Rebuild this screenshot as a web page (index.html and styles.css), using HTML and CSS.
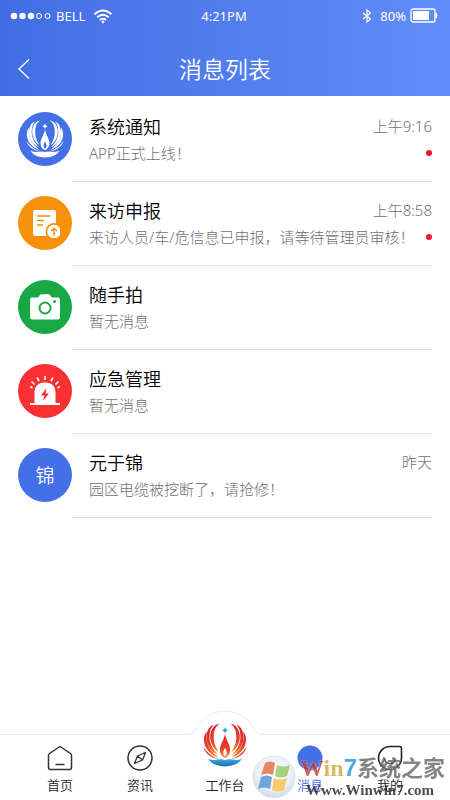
FILE: index.html
```html
<!DOCTYPE html>
<html lang="zh-CN">
<head>
	<meta charset="utf-8">
	<meta name="viewport" content="width=device-width, initial-scale=1">
	<title>消息列表</title>

	<link rel="stylesheet" href="styles.css">
</head>
<body>

	<!-- lotus logo, used in the list and in the tab bar -->
	<svg class="defs" width="0" height="0">
		<defs>
			<linearGradient id="fire" x1="0" y1="0" x2="0" y2="1">
				<stop offset="0" stop-color="#d8202c"></stop>
				<stop offset="0.6" stop-color="#e5402a"></stop>
				<stop offset="1" stop-color="#f58a2c"></stop>
			</linearGradient>
			<linearGradient id="sea" x1="0" y1="0" x2="0" y2="1">
				<stop offset="0" stop-color="#3fb4e8"></stop>
				<stop offset="1" stop-color="#1668b8"></stop>
			</linearGradient>
			<g id="wing">
				<path d="M48 2C36 2 22 14 20 36C19 58 30 76 44 84C34 68 29 54 30 38C31 20 36 8 48 2Z"></path>
				<path d="M30 5C18 8 9 22 9 42C9 66 24 84 42 92C28 76 19 62 18 42C18 24 22 12 30 5Z"></path>
				<path d="M10 24C2 34 0 46 3 58C8 80 24 94 44 100C26 86 14 72 10 54C8 42 8 34 10 24Z"></path>
				<path d="M0 70C6 90 24 104 48 106C28 100 12 88 0 70Z"></path>
			</g>
			<path id="flame" fill-rule="evenodd" d="M63 30C61 50 48 62 48 78C48 89 54 97 63 102C72 97 78 89 78 78C78 62 65 50 63 30ZM63 72C66 78 68 82 68 87C68 92 66 95 63 97C60 95 58 92 58 87C58 82 60 78 63 72Z"></path>
			<path id="bowl" d="M14 103C34 114 48 101 63 108C78 101 92 114 112 103C98 134 28 134 14 103Z"></path>
			<path id="spark" d="M63 12l3 6 6 3-6 3-3 6-3-6-6-3 6-3z"></path>
		</defs>
	</svg>

	<div class="app">
		<header class="header">
			<div class="status">
				<div class="status-left">
					<svg width="42" height="8" viewBox="0 0 42 8" fill="#fff">
						<circle cx="4" cy="4" r="3.2"></circle>
						<circle cx="12.5" cy="4" r="3.2"></circle>
						<circle cx="21" cy="4" r="3.2"></circle>
						<circle cx="29" cy="4" r="2.5" fill="none" stroke="#fff"></circle>
						<circle cx="37.5" cy="4" r="2.5" fill="none" stroke="#fff"></circle>
					</svg>
					<span class="carrier">BELL</span>
					<svg width="20" height="15" viewBox="0 0 20 15" fill="none" stroke="#fff" stroke-width="2">
						<path d="M1.5 5.2Q10 -2.2 18.5 5.2M4.3 8.2Q10 3.2 15.7 8.2M7 11Q10 8.6 13 11"></path>
						<circle cx="10" cy="13" r="1" stroke-width="1" fill="#fff"></circle>
					</svg>
				</div>
				<span>4:21PM</span>
				<div class="status-right">
					<svg width="10" height="14" viewBox="0 0 10 14" fill="none" stroke="#fff" stroke-width="1.2">
						<path d="M1 4L8.5 10L5 13V1L8.5 4L1 10"></path>
					</svg>
					<span class="percent">80%</span>
					<svg width="28" height="16" viewBox="0 0 28 16">
						<rect x="1" y="1" width="24" height="13" rx="2" fill="none" stroke="#fff" stroke-width="1.3"></rect>
						<rect x="3" y="3" width="16" height="9" fill="#fff"></rect>
						<path d="M26 5Q28 7.5 26 10Z" fill="#fff" stroke="#fff"></path>
					</svg>
				</div>
			</div>
			<div class="titlebar">
				<button class="back" type="button" aria-label="返回">
					<svg width="12" height="20" viewBox="0 0 12 20" fill="none" stroke="#fff" stroke-width="1.3">
						<path d="M11 .5L1 10L11 19.5"></path>
					</svg>
				</button>
				<h1>消息列表</h1>
			</div>
		</header>

		<ul class="list">
			<li class="item">
				<div class="avatar blue">
					<svg width="38" height="38" viewBox="0 0 126 128" fill="#fff">
						<use href="#wing"></use>
						<use href="#wing" transform="translate(126 0) scale(-1 1)"></use>
						<use href="#flame"></use>
						<use href="#bowl"></use>
						<use href="#spark"></use>
					</svg>
				</div>
				<div class="content">
					<div class="line"><h2>系统通知</h2><time>上午9:16</time></div>
					<div class="line"><p>APP正式上线！</p><i class="dot"></i></div>
				</div>
			</li>
			<li class="item">
				<div class="avatar orange">
					<svg width="30" height="30" viewBox="0 0 30 30">
						<rect x="3" y="2" width="23" height="26" rx="2" fill="#fff"></rect>
						<path d="M7 8H20M7 12.5H14M7 17H13" stroke="#f7900a" stroke-width="1.5"></path>
						<circle cx="24" cy="23.5" r="8.5" fill="#f7900a"></circle>
						<circle cx="24" cy="23.5" r="6.8" fill="#fff"></circle>
						<path d="M24 27.5V20.5M21 23L24 20.2L27 23" fill="none" stroke="#f7900a" stroke-width="1.5"></path>
					</svg>
				</div>
				<div class="content">
					<div class="line"><h2>来访申报</h2><time>上午8:58</time></div>
					<div class="line"><p>来访人员/车/危信息已申报，请等待管理员审核！</p><i class="dot"></i></div>
				</div>
			</li>
			<li class="item">
				<div class="avatar green">
					<svg width="30" height="26" viewBox="0 0 30 26">
						<path d="M2 3.500H8L10 1Q10.5 .3 11.5 .3H18.5Q19.5 .3 20 1L22 3.5H28Q30 3.5 30 5.5V23.5Q30 25.5 28 25.5H2Q0 25.5 0 23.5V5.5Q0 3.5 2 3.5Z" fill="#fff"></path>
						<circle cx="15" cy="14" r="5.5" fill="none" stroke="#18a844" stroke-width="2"></circle>
						<circle cx="24.5" cy="7.5" r="1.5" fill="#18a844"></circle>
					</svg>
				</div>
				<div class="content">
					<div class="line"><h2>随手拍</h2></div>
					<div class="line"><p>暂无消息</p></div>
				</div>
			</li>
			<li class="item">
				<div class="avatar red">
					<svg width="30" height="30" viewBox="0 0 30 30">
						<path d="M4.5 27V17Q4.500 6.500 15 6.500T25.500 17V27H30V29H0V27Z" fill="#fff"></path>
						<path d="M15 4V0M9 5L7 1.5M21 5L23 1.5M4.500 8.500L1.500 5.500M25.500 8.500L28.500 5.500M2.500 12L.2 10.500M27.500 12L29.800 10.500" stroke="#fff" stroke-width="1.6"></path>
						<path d="M16.500 12L11 19.500H14.500L13 25L19 17.500H15.500Z" fill="#fa3032"></path>
					</svg>
				</div>
				<div class="content">
					<div class="line"><h2>应急管理</h2></div>
					<div class="line"><p>暂无消息</p></div>
				</div>
			</li>
			<li class="item">
				<div class="avatar blue">锦</div>
				<div class="content">
					<div class="line"><h2>元于锦</h2><time>昨天</time></div>
					<div class="line"><p>园区电缆被挖断了，请抢修！</p></div>
				</div>
			</li>
		</ul>

		<nav class="tabs">
			<a class="tab" href="#home">
				<svg width="26" height="26" viewBox="0 0 26 26" fill="none" stroke="#333" stroke-width="1.5" stroke-linejoin="round">
					<path d="M13 1.5L23.5 8.5Q24.5 9.2 24.5 10.5V22.5Q24.5 24.5 22.5 24.5H3.5Q1.5 24.5 1.5 22.5V10.5Q1.5 9.2 2.5 8.500Z"></path>
					<path d="M8.5 19.5H17.5"></path>
				</svg>
				<span>首页</span>
			</a>
			<a class="tab" href="#news">
				<svg width="26" height="26" viewBox="0 0 26 26" fill="none" stroke="#333" stroke-width="1.5">
					<circle cx="13" cy="13" r="12"></circle>
					<path d="M18.5 7.5L10.5 11L7.5 18.5L15.5 15ZM10.5 11L15.5 15" stroke-linejoin="round" stroke-width="1.3"></path>
				</svg>
				<span>资讯</span>
			</a>
			<a class="tab center" href="#work">
				<svg class="bump" width="72" height="26" viewBox="0 0 72 26">
					<path d="M2 25Q14 1 36 1T70 25V26H2Z" fill="#fff"></path>
					<path d="M1 24Q4 24 6 20Q17 1 36 1T66 20Q68 24 71 24" fill="none" stroke="#ececec"></path>
				</svg>
				<svg class="logo" width="44" height="44" viewBox="0 0 126 128">
					<g fill="url(#fire)">
						<use href="#wing"></use>
						<use href="#wing" transform="translate(126 0) scale(-1 1)"></use>
						<use href="#flame"></use>
					</g>
					<use href="#bowl" fill="url(#sea)"></use>
					<use href="#spark" fill="#2f9fda"></use>
				</svg>
				<span>工作台</span>
			</a>
			<a class="tab active" href="#message">
				<svg width="26" height="26" viewBox="0 0 26 26">
					<circle cx="13" cy="13" r="12.5" fill="#4370e6"></circle>
				</svg>
				<span>消息</span>
			</a>
			<a class="tab" href="#me">
				<svg width="26" height="26" viewBox="0 0 26 26" fill="none" stroke="#222" stroke-width="1.6">
					<path d="M13 1.5H22.5Q24.5 1.5 24.5 3.5V13A11.5 11.5 0 1 1 13 1.5Z"></path>
					<path d="M7.5 13.5Q8 18.5 13 18.5T18.5 13.5"></path>
				</svg>
				<span>我的</span>
			</a>
		</nav>
	</div>

	<div class="watermark">
		<svg width="44" height="44" viewBox="0 0 44 44">
			<defs>
				<radialGradient id="orb" cx="0.5" cy="0.4" r="0.6">
					<stop offset="0" stop-color="#fff"></stop>
					<stop offset="0.7" stop-color="#e4ecf3"></stop>
					<stop offset="1" stop-color="#c0d0de"></stop>
				</radialGradient>
			</defs>
			<circle cx="22" cy="22" r="21" fill="url(#orb)" stroke="#d5dfe8"></circle>
			<path d="M13 8Q18 5 23 8L21 20Q15 17 9 20Z" fill="#e5693b"></path>
			<path d="M25 10Q31 13 38 10L35 21Q29 24 23 21Z" fill="#93c65e"></path>
			<path d="M9 22Q15 19 20 22L18 34Q12 31 6 34Z" fill="#4a8fd4"></path>
			<path d="M22 23Q28 26 35 23L32 35Q26 38 20 35Z" fill="#f6bf42"></path>
		</svg>
		<div class="mark-text">
			<div class="mark-name"><b class="w">W</b><b class="in">in</b><b class="seven">7</b>系统之家</div>
			<div class="mark-url">Www.Winwin7.com</div>
		</div>
	</div>

</body>
</html>
```

FILE: styles.css
```css
*{
	margin: 0;
	padding: 0;
	box-sizing: border-box;
}
body{
	background: #fff;
	color: #111;
	font-family: "Noto Sans", "Noto Sans CJK SC", sans-serif;
}
.defs{
	position: absolute;
}
svg{
	display: block;
	flex-shrink: 0;
}
.app{
	display: flex;
	flex-direction: column;
	min-height: 100vh;
}

/* header */
.header{
	background: linear-gradient(90deg, #426ee4, #608df7);
	color: #fff;
	padding-bottom: 10px;
}
.status{
	display: grid;
	grid-template-columns: 1fr auto 1fr;
	align-items: center;
	height: 32px;
	padding: 0 12px 0 10px;
	font-size: 13px;
}
.status-left,
.status-right{
	display: flex;
	align-items: center;
}
.status-right{
	justify-content: flex-end;
}
.carrier{
	margin: 0 8px 0 4px;
}
.percent{
	margin: 0 4px 0 8px;
}
.titlebar{
	display: grid;
	grid-template-columns: 48px 1fr 48px;
	align-items: center;
	height: 54px;
	padding-top: 20px;
}
.back{
	display: flex;
	padding: 0 0 0 18px;
	background: none;
	border: none;
}
.titlebar h1{
	font-size: 23px;
	line-height: 34px;
	font-weight: 350;
	text-align: center;
}

/* messages */
.list{
	list-style: none;
	padding: 2px 18px 0;
}
.item{
	display: flex;
	height: 84px;
}
.avatar{
	display: flex;
	justify-content: center;
	align-items: center;
	flex-shrink: 0;
	width: 54px;
	height: 54px;
	margin-top: 14px;
	border-radius: 50%;
	color: #fff;
	font-size: 19px;
	font-weight: 350;
}
.blue{
	background: #4370e6;
}
.orange{
	background: #f7900a;
}
.green{
	background: #18a844;
}
.red{
	background: #fa3032;
}
.content{
	flex: 1;
	padding: 14px 0 0 17px;
	border-bottom: 1px solid #e2e2e2;
}
.line{
	display: flex;
	justify-content: space-between;
	align-items: center;
	height: 27px;
	white-space: nowrap;
}
.line h2{
	color: #000;
	font-size: 18px;
	font-weight: 350;
}
.line p,
.line time{
	color: #707070;
	font-size: 15px;
	font-weight: 300;
}
.dot{
	width: 6px;
	height: 6px;
	border-radius: 50%;
	background: #f01820;
}

/* bottom tabs */
.tabs{
	display: flex;
	height: 66px;
	margin-top: auto;
	padding: 0 20px;
	border-top: 1px solid #ececec;
	background: #fff;
}
.tab{
	position: relative;
	display: flex;
	flex: 8;
	flex-direction: column;
	justify-content: flex-end;
	align-items: center;
	gap: 4px;
	padding-bottom: 5px;
	color: #222;
	font-size: 13px;
	font-weight: 350;
	line-height: 20px;
	text-decoration: none;
}
.tab.center{
	flex: 9;
}
.tab.active{
	color: #4370e6;
}
.bump{
	position: absolute;
	left: 50%;
	top: -25px;
	margin-left: -36px;
}
.logo{
	position: relative;
	margin-bottom: 4px;
}

/* site mark over the corner */
.watermark{
	position: fixed;
	right: 5px;
	bottom: 1px;
	display: flex;
	align-items: center;
	gap: 4px;
	opacity: 0.8;
	pointer-events: none;
}
.mark-name{
	color: #666;
	font-size: 22px;
	line-height: 26px;
	font-weight: 700;
	text-shadow: 0 0 2px #fff;
	white-space: nowrap;
}
.mark-name b{
	font-family: "Liberation Serif", serif;
	font-size: 24px;
}
.mark-name .w{
	color: #c93a35;
}
.mark-name .in{
	color: #d9a63a;
}
.mark-name .seven{
	color: #2497d8;
	font-family: "Liberation Sans", sans-serif;
}
.mark-url{
	padding-left: 6px;
	font-family: "Liberation Serif", serif;
	font-size: 15px;
	line-height: 18px;
	font-weight: 700;
	color: #222;
}
```
